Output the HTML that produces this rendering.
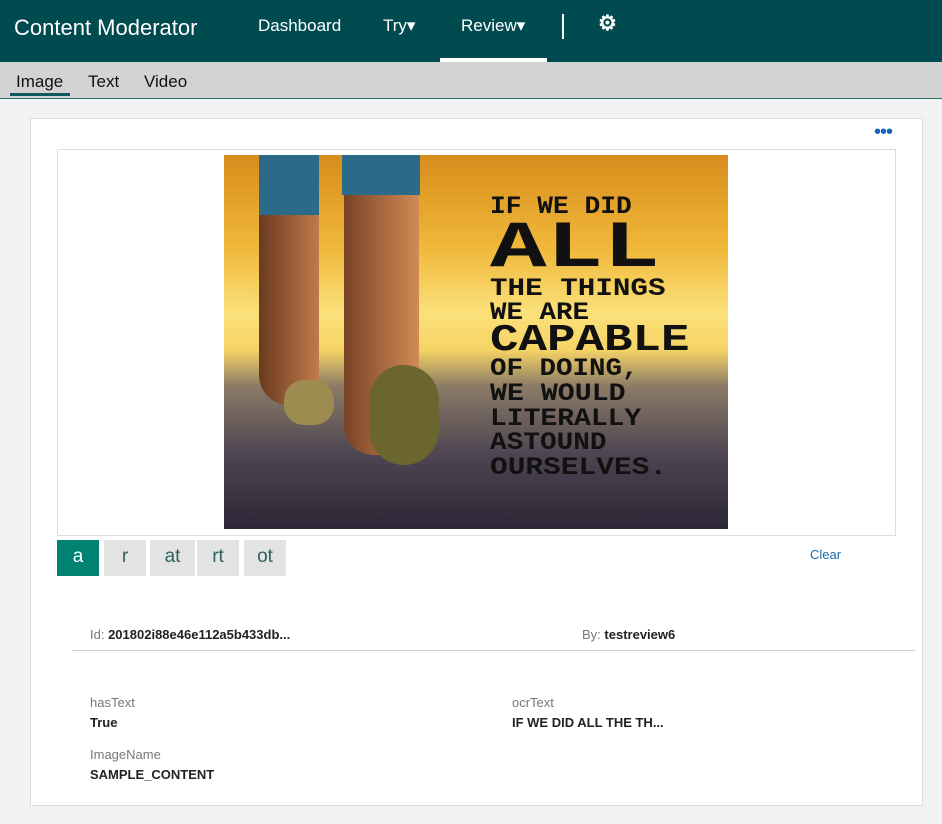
<!DOCTYPE html><html><head><style>
body{margin:0;width:942px;height:824px;background:#f2f2f2;font-family:"Liberation Sans",sans-serif;position:relative;overflow:hidden}
.top{position:absolute;left:0;top:0;width:942px;height:62px;background:#004b50;color:#fff}
.top span{position:absolute;font-size:17px;top:16px}
.sub{position:absolute;top:62px;left:0;width:942px;height:36px;background:#d3d3d3;border-bottom:1px solid #2f6f72}
.sub span{position:absolute;top:10px;font-size:17px;color:#111}
.card{position:absolute;left:30px;top:118px;width:891px;height:686px;background:#fff;border:1px solid #ddd}
.frame{position:absolute;left:57px;top:149px;width:837px;height:385px;border:1px solid #ddd;background:#fff}
.img{position:absolute;left:224px;top:155px;width:504px;height:374px;overflow:hidden;background:linear-gradient(180deg,#d88d1c 0%,#f0b83a 25%,#fbe07a 42%,#f6d466 52%,#8a7a66 62%,#4e4552 80%,#2d2636 100%)}
.q{position:absolute;left:490px;font-family:"Liberation Mono",monospace;font-weight:bold;color:#111;line-height:1;transform-origin:left top;white-space:nowrap}
.tag{position:absolute;top:540px;height:36px;width:42px;background:#e3e3e3;color:#2f6060;font-size:19px;text-align:center;line-height:34px}
.l{position:absolute;font-size:13px;color:#777}
.v{position:absolute;font-size:13px;color:#222;font-weight:bold}
</style></head><body>
<div class="top">
<span style="left:14px;top:15px;font-size:22px">Content Moderator</span>
<span style="left:258px">Dashboard</span>
<span style="left:383px">Try▾</span>
<span style="left:461px">Review▾</span>
<div style="position:absolute;left:562px;top:14px;width:2px;height:25px;background:#fff"></div>
<span style="left:598px;top:11px;font-size:21px;font-weight:bold">⚙</span>
<div style="position:absolute;left:440px;top:58px;width:107px;height:4px;background:#fff"></div>
</div>
<div class="sub"><span style="left:16px">Image</span><span style="left:88px">Text</span><span style="left:144px">Video</span>
<div style="position:absolute;left:10px;top:31px;width:60px;height:3px;background:#0e5a5e"></div></div>
<div class="card"><div style="position:absolute;right:30px;top:2px;color:#1565c0;font-size:20px;letter-spacing:-1px">•••</div></div>
<div class="frame"></div>
<div class="img">
<div style="position:absolute;left:35px;top:0;width:60px;height:250px;background:linear-gradient(90deg,#6a3b20,#c07a4a);border-radius:0 0 30px 30px"></div>
<div style="position:absolute;left:35px;top:0;width:60px;height:60px;background:#2c6a8a"></div>
<div style="position:absolute;left:120px;top:0;width:75px;height:300px;background:linear-gradient(90deg,#7a4326,#d08a55);border-radius:0 0 30px 30px"></div>
<div style="position:absolute;left:118px;top:0;width:78px;height:40px;background:#2c6a8a"></div>
<div style="position:absolute;left:145px;top:210px;width:70px;height:100px;background:#6b6530;border-radius:35px"></div>
<div style="position:absolute;left:60px;top:225px;width:50px;height:45px;background:#9c8c50;border-radius:20px"></div>
</div>
<div class="q" style="top:194px;font-size:25px;transform:scaleX(1.05)">IF WE DID</div>
<div class="q" style="top:216px;font-size:66px;transform:scaleX(1.43)">ALL</div>
<div class="q" style="top:276px;font-size:25px;transform:scaleX(1.17)">THE THINGS</div>
<div class="q" style="top:300px;font-size:25px;transform:scaleX(1.1)">WE ARE</div>
<div class="q" style="top:322px;font-size:38px;transform:scaleX(1.25)">CAPABLE</div>
<div class="q" style="top:356px;font-size:25px;transform:scaleX(1.1)">OF DOING,</div>
<div class="q" style="top:381px;font-size:25px;transform:scaleX(1.13)">WE WOULD</div>
<div class="q" style="top:406px;font-size:25px;transform:scaleX(1.12)">LITERALLY</div>
<div class="q" style="top:430px;font-size:25px;transform:scaleX(1.11)">ASTOUND</div>
<div class="q" style="top:455px;font-size:25px;transform:scaleX(1.18)">OURSELVES.</div>
<div class="tag" style="left:57px;background:#008272;color:#fff">a</div>
<div class="tag" style="left:104px">r</div>
<div class="tag" style="left:150px;width:45px">at</div>
<div class="tag" style="left:197px;width:42px">rt</div>
<div class="tag" style="left:244px;width:42px">ot</div>
<div style="position:absolute;left:810px;top:547px;font-size:13px;color:#1a6fb0">Clear</div>
<div class="l" style="left:90px;top:627px">Id: <b style="color:#222">201802i88e46e112a5b433db...</b></div>
<div class="l" style="left:582px;top:627px">By: <b style="color:#222">testreview6</b></div>
<div style="position:absolute;left:72px;top:650px;width:843px;height:1px;background:#ccc"></div>
<div class="l" style="left:90px;top:695px">hasText</div><div class="v" style="left:90px;top:715px">True</div>
<div class="l" style="left:512px;top:695px">ocrText</div><div class="v" style="left:512px;top:715px">IF WE DID ALL THE TH...</div>
<div class="l" style="left:90px;top:747px">ImageName</div><div class="v" style="left:90px;top:767px">SAMPLE_CONTENT</div>
</body></html>
